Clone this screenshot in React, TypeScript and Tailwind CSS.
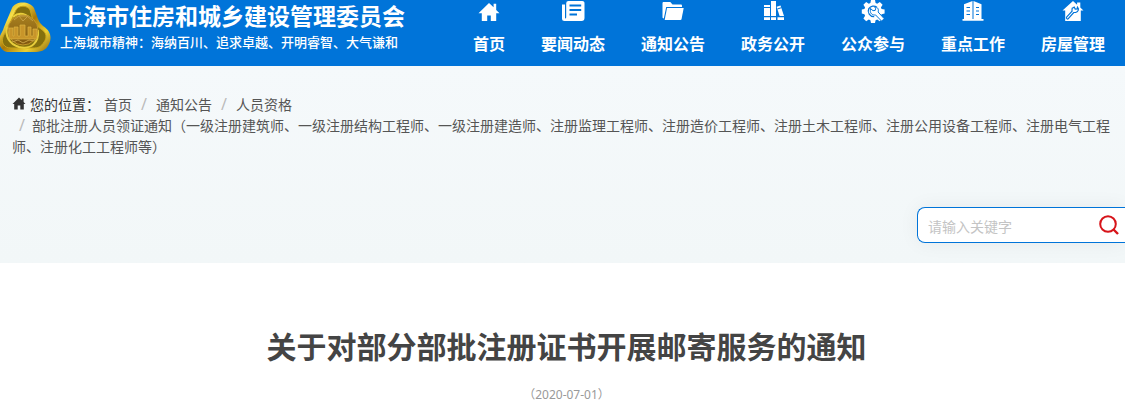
import type { ReactNode } from 'react'

interface NavItem {
  label: string
  icon: ReactNode
}

const BLUE = '#0074d9'

const navItems: NavItem[] = [
  {
    label: '首页',
    icon: (
      <>
        <path d="M12 3 1.5 13.2h3.3V21h5.4v-5.6h3.6V21h5.4v-7.8h3.3l-3.3-3.3V3.8h-2.6v3.5z" />
      </>
    ),
  },
  {
    label: '要闻动态',
    icon: (
      <>
        <path d="M1 4.5v14A2.5 2.5 0 0 0 3.5 21h17a3 3 0 0 0 3-3V3.5A2.3 2.3 0 0 0 21.2 1H7.5a2.3 2.3 0 0 0-2.3 2.3v14.2a1.2 1.2 0 0 1-1.2 1V4.5z" />
        <path d="M8.5 5.5h11.7M8.5 10h11.7M8.5 14.5h7.5" stroke={BLUE} strokeWidth="1.8" />
      </>
    ),
  },
  {
    label: '通知公告',
    icon: (
      <>
        <path d="M1.5 3.2c0-.7.5-1.2 1.2-1.2h6.6l2.2 2.5h8.3c.7 0 1.2.5 1.2 1.2V7H5.2L2.8 18.5c-.8 0-1.3-.5-1.3-1.2z" />
        <path d="M6 8h16.7l-2.2 11.2c-.1.5-.6.8-1.1.8H3.7z" />
      </>
    ),
  },
  {
    label: '政务公开',
    icon: (
      <>
        <path d="M3 5h6v11H3zM10 1h5v15h-5z" />
        <path d="m15.6 6.7 3.9-1.2L23 16h-4.4z" />
        <path d="M3 17.3h6V20H3zM10 17.3h5V20h-5zM16.5 17.3H23V20h-6.5z" />
        <path d="M3 7.5h6M16.3 9l4.2-1.3" stroke={BLUE} strokeWidth="1" />
      </>
    ),
  },
  {
    label: '公众参与',
    icon: (
      <>
        <path d="M10 0h4l.6 3 1.6.7L18.8 2l2.8 2.8-1.7 2.6.7 1.6 3 .6v4l-3 .6-.7 1.6 1.7 2.6-2.8 2.8-2.6-1.7-1.6.7-.6 2.8h-4l-.6-2.8-1.6-.7-2.6 1.7-2.8-2.8 1.7-2.6-.7-1.6-2.6-.6v-4l2.6-.6.7-1.6-1.7-2.6L5.2 2l2.6 1.7L9.4 3z" />
        <path d="M16 7.4a5.5 5.5 0 0 0-8.2 1.2 5.6 5.6 0 0 0 5.4 8" fill="none" stroke={BLUE} strokeWidth="1.3" />
        <path d="m9.4 8.4 2.6 2.3 2.2-.3.5-2.2-1.2-1.4c3.3.1 4.5 2.8 3.6 5.2l6 6.6-2.4 2.6-6.2-6.3c-2.9.7-5.6-1.7-5.1-4.4z" stroke={BLUE} strokeWidth="1" />
      </>
    ),
  },
  {
    label: '重点工作',
    icon: (
      <>
        <path d="M3 4.2 11.5 1v18.5H3zM12.5 1 20.5 4.2v15.3h-8zM1.5 19h21v1.8h-21z" />
        <path d="M5.5 7.5H9M5.5 11H9M5.5 14.5H9M15 7.5h3M15 11h3M15 14.5h3" stroke={BLUE} strokeWidth="1.2" />
      </>
    ),
  },
  {
    label: '房屋管理',
    icon: (
      <>
        <path d="M12 1 1.5 10.5h2.7V21h15.6V10.5h2.7l-3.2-3V2.5h-3.2v2.3z" />
        <path
          d="m11.2 8.2 2-1.1 1 2 2-.2.3-1.8c1.7 1.7 1 4.7-1.7 5.2l-2.1.2-5.4 6.2c-.8.9-2.5-.5-1.7-1.5l5.5-6.1c-.4-1 .1-2.2.1-2.9z"
          fill="none"
          stroke={BLUE}
          strokeWidth="1.2"
        />
      </>
    ),
  },
]

const crumbs = [
  '首页',
  '通知公告',
  '人员资格',
  '部批注册人员领证通知（一级注册建筑师、一级注册结构工程师、一级注册建造师、注册监理工程师、注册造价工程师、注册土木工程师、注册公用设备工程师、注册电气工程师、注册化工工程师等）',
]

function Emblem() {
  return (
    <svg width="52" height="54" viewBox="0 0 52 54" className="shrink-0" aria-hidden="true">
      <defs>
        <linearGradient id="rim" x1="0" y1="0" x2="1" y2="1">
          <stop offset="0" stopColor="#b98a08" />
          <stop offset="0.25" stopColor="#f6e04a" />
          <stop offset="0.5" stopColor="#a87808" />
          <stop offset="0.75" stopColor="#ecd032" />
          <stop offset="1" stopColor="#8a6410" />
        </linearGradient>
        <linearGradient id="disc" x1="0" y1="0" x2="0" y2="1">
          <stop offset="0" stopColor="#a98120" />
          <stop offset="1" stopColor="#80560f" />
        </linearGradient>
      </defs>
      <path
        d="M12 8C15 .5 30 .5 34 8l4 11c1 3 3 5 5 7 8 5 9 12 6 18-3 7-9 8-15 8H9C2 52-3 45 0 36c1-3 3-5 4-9z"
        fill="url(#rim)"
      />
      <path
        d="M16 10c3-5 11-5 14 0l3 10c1 4 4 6 8 9 6 4 6 9 3 13-3 5-6 6-11 6H11C4 48 1 43 3 37c1-3 3-5 5-9z"
        fill="#84700e"
        stroke="#c9a41a"
        strokeWidth="1"
      />
      <path d="M7 27c-2 9 2 17 12 20 13 3 20-5 19-17M13 17c8-7 18-1 21 7" fill="none" stroke="#e9ce3b" strokeWidth="2" />
      <circle cx="23" cy="30" r="15" fill="url(#disc)" stroke="#c4972a" strokeWidth="1" />
      <path d="m14 20 5-4h8l6 5M19 16l4 5 5-5M12 42l6-2 5 3 6-3 6 1" fill="none" stroke="#c6a044" strokeWidth="1" />
      <path
        d="M9 28h4v8h1v-9h4v9h2V25h5v11h3v-9h3v9h2v-7h4v10H9z"
        fill="#c8952a"
        stroke="#dcb544"
        strokeWidth="0.7"
      />
    </svg>
  )
}

function Header() {
  return (
    <header className="flex items-start justify-between bg-[#0074d9] pr-0.5 text-white">
      <a href="#" className="flex items-start">
        <Emblem />
        <div className="pt-1 pl-2">
          <div className="text-[23px] leading-6 font-bold whitespace-nowrap">上海市住房和城乡建设管理委员会</div>
          <div className="mt-1 text-[13px] leading-5 font-medium whitespace-nowrap">
            上海城市精神：海纳百川、追求卓越、开明睿智、大气谦和
          </div>
        </div>
      </a>
      <nav className="flex">
        {navItems.map(item => (
          <a key={item.label} href="#" className="flex flex-col items-center px-[18px] pb-2.5">
            <svg width="24" height="24" viewBox="0 0 24 24" fill="currentColor" aria-hidden="true">
              {item.icon}
            </svg>
            <span className="mt-2 text-base leading-6 font-bold whitespace-nowrap">{item.label}</span>
          </a>
        ))}
      </nav>
    </header>
  )
}

function Breadcrumb() {
  return (
    <nav aria-label="您的位置" className="px-3 text-sm leading-[21px] text-[#555]">
      <ol>
        <li className="mr-1 inline-block text-[#333]">
          <svg width="14" height="14" viewBox="0 0 14 14" className="mr-1 inline-block align-[-1px]" fill="#333" aria-hidden="true">
            <path d="M7 .5.5 7h1.7v5.6h3.5V8.5h2.6v4.1h3.5V7h1.7l-1.9-1.9V1.4H9.8v1.8z" />
          </svg>
          您的位置：
        </li>
        {crumbs.map((crumb, i) => (
          <li
            key={crumb}
            className={
              i > 0
                ? "inline-block before:inline-block before:w-5 before:text-center before:text-base before:leading-none before:text-[#bbb] before:content-['/'] not-last:before:w-6"
                : 'inline-block'
            }
          >
            <a href="#">{crumb}</a>
          </li>
        ))}
      </ol>
    </nav>
  )
}

function SearchBox() {
  return (
    <form
      role="search"
      className="ml-auto flex h-9 w-52 items-center rounded-l-lg border border-r-0 border-[#0074d9] bg-white shadow-[0_0_20px_rgba(0,0,0,0.06)]"
    >
      <input
        type="text"
        aria-label="请输入关键字"
        placeholder="请输入关键字"
        className="w-0 flex-1 bg-transparent pt-1 pl-2.5 text-sm text-[#333] outline-none placeholder:text-[#c4c4c4]"
      />
      <button type="button" aria-label="搜索" className="pr-1.5">
        <svg width="20" height="20" viewBox="0 0 20 20" fill="none" stroke="#d7141a" strokeWidth="2" aria-hidden="true">
          <circle cx="9" cy="9" r="7.8" />
          <path d="m14.5 14.5 4.5 4.5" strokeWidth="2.4" />
        </svg>
      </button>
    </form>
  )
}

export default function App() {
  return (
    <div className="bg-white font-['Noto_Sans','Noto_Sans_CJK_SC',sans-serif]">
      <Header />
      <section className="overflow-hidden bg-linear-to-b from-[#f5f9fb] to-[#f2f7f8] pt-7 pb-5">
        <Breadcrumb />
        <div className="mt-[50px]">
          <SearchBox />
        </div>
      </section>
      <main className="pt-16 pl-2 text-center">
        <h1 className="text-3xl leading-10 font-bold text-[#444]">关于对部分部批注册证书开展邮寄服务的通知</h1>
        <p className="mt-[18px] text-xs leading-5 text-[#999]">（2020-07-01）</p>
      </main>
    </div>
  )
}
